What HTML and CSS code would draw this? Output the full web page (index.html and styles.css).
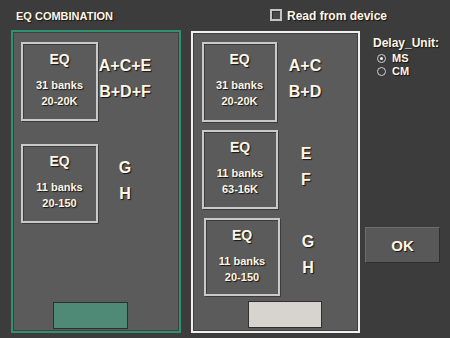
FILE: index.html
```html
<!DOCTYPE html>
<html lang="en">
<head>
<meta charset="UTF-8">
<title>EQ Combination</title>
<link rel="stylesheet" href="styles.css">
</head>
<body>
<div class="page">
    <!-- Header: title and read checkbox -->
    <div class="head">
        <div class="title">EQ COMBINATION</div>
        <label class="check">
            <span class="check-box"></span>
            <span>Read from device</span>
        </label>
    </div>

    <div class="main">
        <!-- Left combination: 2 EQ blocks -->
        <div class="panel panel-green">
            <div class="row row-first">
                <div class="eq">
                    <div class="eq-name">EQ</div>
                    <div class="eq-info">31 banks</div>
                    <div class="eq-info">20-20K</div>
                </div>
                <div class="labels labels-left">
                    <div>A+C+E</div>
                    <div>B+D+F</div>
                </div>
            </div>
            <div class="row row-second">
                <div class="eq">
                    <div class="eq-name">EQ</div>
                    <div class="eq-info">11 banks</div>
                    <div class="eq-info">20-150</div>
                </div>
                <div class="labels labels-left">
                    <div>G</div>
                    <div>H</div>
                </div>
            </div>
            <div class="select-btn select-green"></div>
        </div>

        <!-- Right combination: 3 EQ blocks -->
        <div class="panel panel-white">
            <div class="row row-r1">
                <div class="eq eq-r1">
                    <div class="eq-name">EQ</div>
                    <div class="eq-info">31 banks</div>
                    <div class="eq-info">20-20K</div>
                </div>
                <div class="labels labels-right">
                    <div>A+C</div>
                    <div>B+D</div>
                </div>
            </div>
            <div class="row row-r2">
                <div class="eq eq-r2">
                    <div class="eq-name">EQ</div>
                    <div class="eq-info">11 banks</div>
                    <div class="eq-info">63-16K</div>
                </div>
                <div class="labels labels-right">
                    <div>E</div>
                    <div>F</div>
                </div>
            </div>
            <div class="row row-r3">
                <div class="eq eq-r3">
                    <div class="eq-name">EQ</div>
                    <div class="eq-info">11 banks</div>
                    <div class="eq-info">20-150</div>
                </div>
                <div class="labels labels-right">
                    <div>G</div>
                    <div>H</div>
                </div>
            </div>
            <div class="select-btn select-gray"></div>
        </div>

        <!-- Side options -->
        <div class="side">
            <div class="delay-title">Delay_Unit:</div>
            <label class="radio"><span class="radio-dot checked"></span>MS</label>
            <label class="radio"><span class="radio-dot"></span>CM</label>
            <div class="ok-btn">OK</div>
        </div>
    </div>
</div>
</body>
</html>
```
FILE: styles.css
```css
body {
    margin: 0;
    background: #3d3c3c;
    font-family: "Liberation Sans", Arial, sans-serif;
    font-weight: bold;
    color: #fdf6e6;
    overflow: hidden;
}
.page {
    width: 450px;
    height: 338px;
    text-shadow: 1px 1px 1px #151515;
}
.head {
    height: 30px;
    box-sizing: border-box;
    padding: 9px 0 0 16px;
    display: grid;
    grid-template-columns: 254px auto;
    align-items: start;
}
.title {
    font-size: 11px;
    line-height: 14px;
}
.check {
    display: flex;
    align-items: flex-start;
    gap: 5px;
    font-size: 12px;
    line-height: 14px;
}
.check-box {
    width: 12px;
    height: 12px;
    box-sizing: border-box;
    border: 2px solid #c4c4c4;
    box-shadow: inset 1px 1px 0 #2e2e2e;
    background: #474747;
}
.main {
    display: flex;
    align-items: flex-start;
    padding-left: 11px;
}
.panel {
    box-sizing: border-box;
    background: #5b5b5b;
    display: flex;
    flex-direction: column;
    box-shadow: inset 0 0 0 1px #404040;
}
.panel-green {
    width: 170px;
    height: 303px;
    border: 2px solid #2f9072;
    padding: 10px 0 0 8px;
}
.panel-white {
    width: 169px;
    height: 302px;
    margin: 1px 0 0 10px;
    border: 2px solid #f0f0f0;
    padding: 9px 0 0 9px;
}
.row {
    display: flex;
    align-items: flex-start;
}
.row-second { margin-top: 23px; }
.row-r2 { margin-top: 8px; }
.row-r3 { margin-top: 9px; margin-left: 2px; }
.eq {
    width: 77px;
    height: 79px;
    box-sizing: border-box;
    border: 2px solid #c9c9c9;
    box-shadow: inset 1px 1px 0 #3c3c3c, 1px 1px 0 #3c3c3c;
    display: flex;
    flex-direction: column;
    align-items: center;
    padding-top: 6px;
}
.eq-r1 { width: 75px; height: 80px; }
.eq-r2 { width: 76px; }
.eq-r3 { width: 76px; height: 78px; }
.eq-name {
    font-size: 14px;
    line-height: 18px;
    margin-bottom: 9px;
}
.eq-info {
    font-size: 11px;
    line-height: 16px;
}
.labels {
    display: flex;
    flex-direction: column;
    align-items: center;
    margin-top: 11px;
    font-size: 16px;
    line-height: 26px;
}
.labels-left { width: 54px; }
.labels-right { width: 56px; }
.select-btn {
    width: 75px;
    height: 27px;
    box-sizing: border-box;
    margin-top: auto;
    border: 1px solid #2f2f2f;
}
.select-green {
    margin: auto 0 2px 32px;
    background: #4e8a75;
}
.select-gray {
    width: 74px;
    margin: auto 0 3px 46px;
    background: #d7d4cf;
}
.side {
    width: 75px;
    margin-left: 5px;
    padding-top: 6px;
    display: flex;
    flex-direction: column;
}
.delay-title {
    font-size: 12px;
    line-height: 14px;
    margin: 0 0 2px 8px;
}
.radio {
    display: flex;
    align-items: center;
    gap: 6px;
    margin-left: 12px;
    font-size: 11px;
    line-height: 13px;
}
.radio-dot {
    width: 9px;
    height: 9px;
    box-sizing: border-box;
    border: 1.5px solid #d0d0d0;
    border-radius: 50%;
    background: #3d3c3c;
    display: flex;
    align-items: center;
    justify-content: center;
}
.radio-dot.checked::after {
    content: "";
    width: 3px;
    height: 3px;
    border-radius: 50%;
    background: #f4f4f4;
}
.ok-btn {
    margin-top: 149px;
    height: 36px;
    box-sizing: border-box;
    background: #585858;
    border: 1px solid;
    border-color: #6c6c6c #2e2e2e #2e2e2e #6c6c6c;
    display: flex;
    align-items: center;
    justify-content: center;
    font-size: 15px;
}
```
